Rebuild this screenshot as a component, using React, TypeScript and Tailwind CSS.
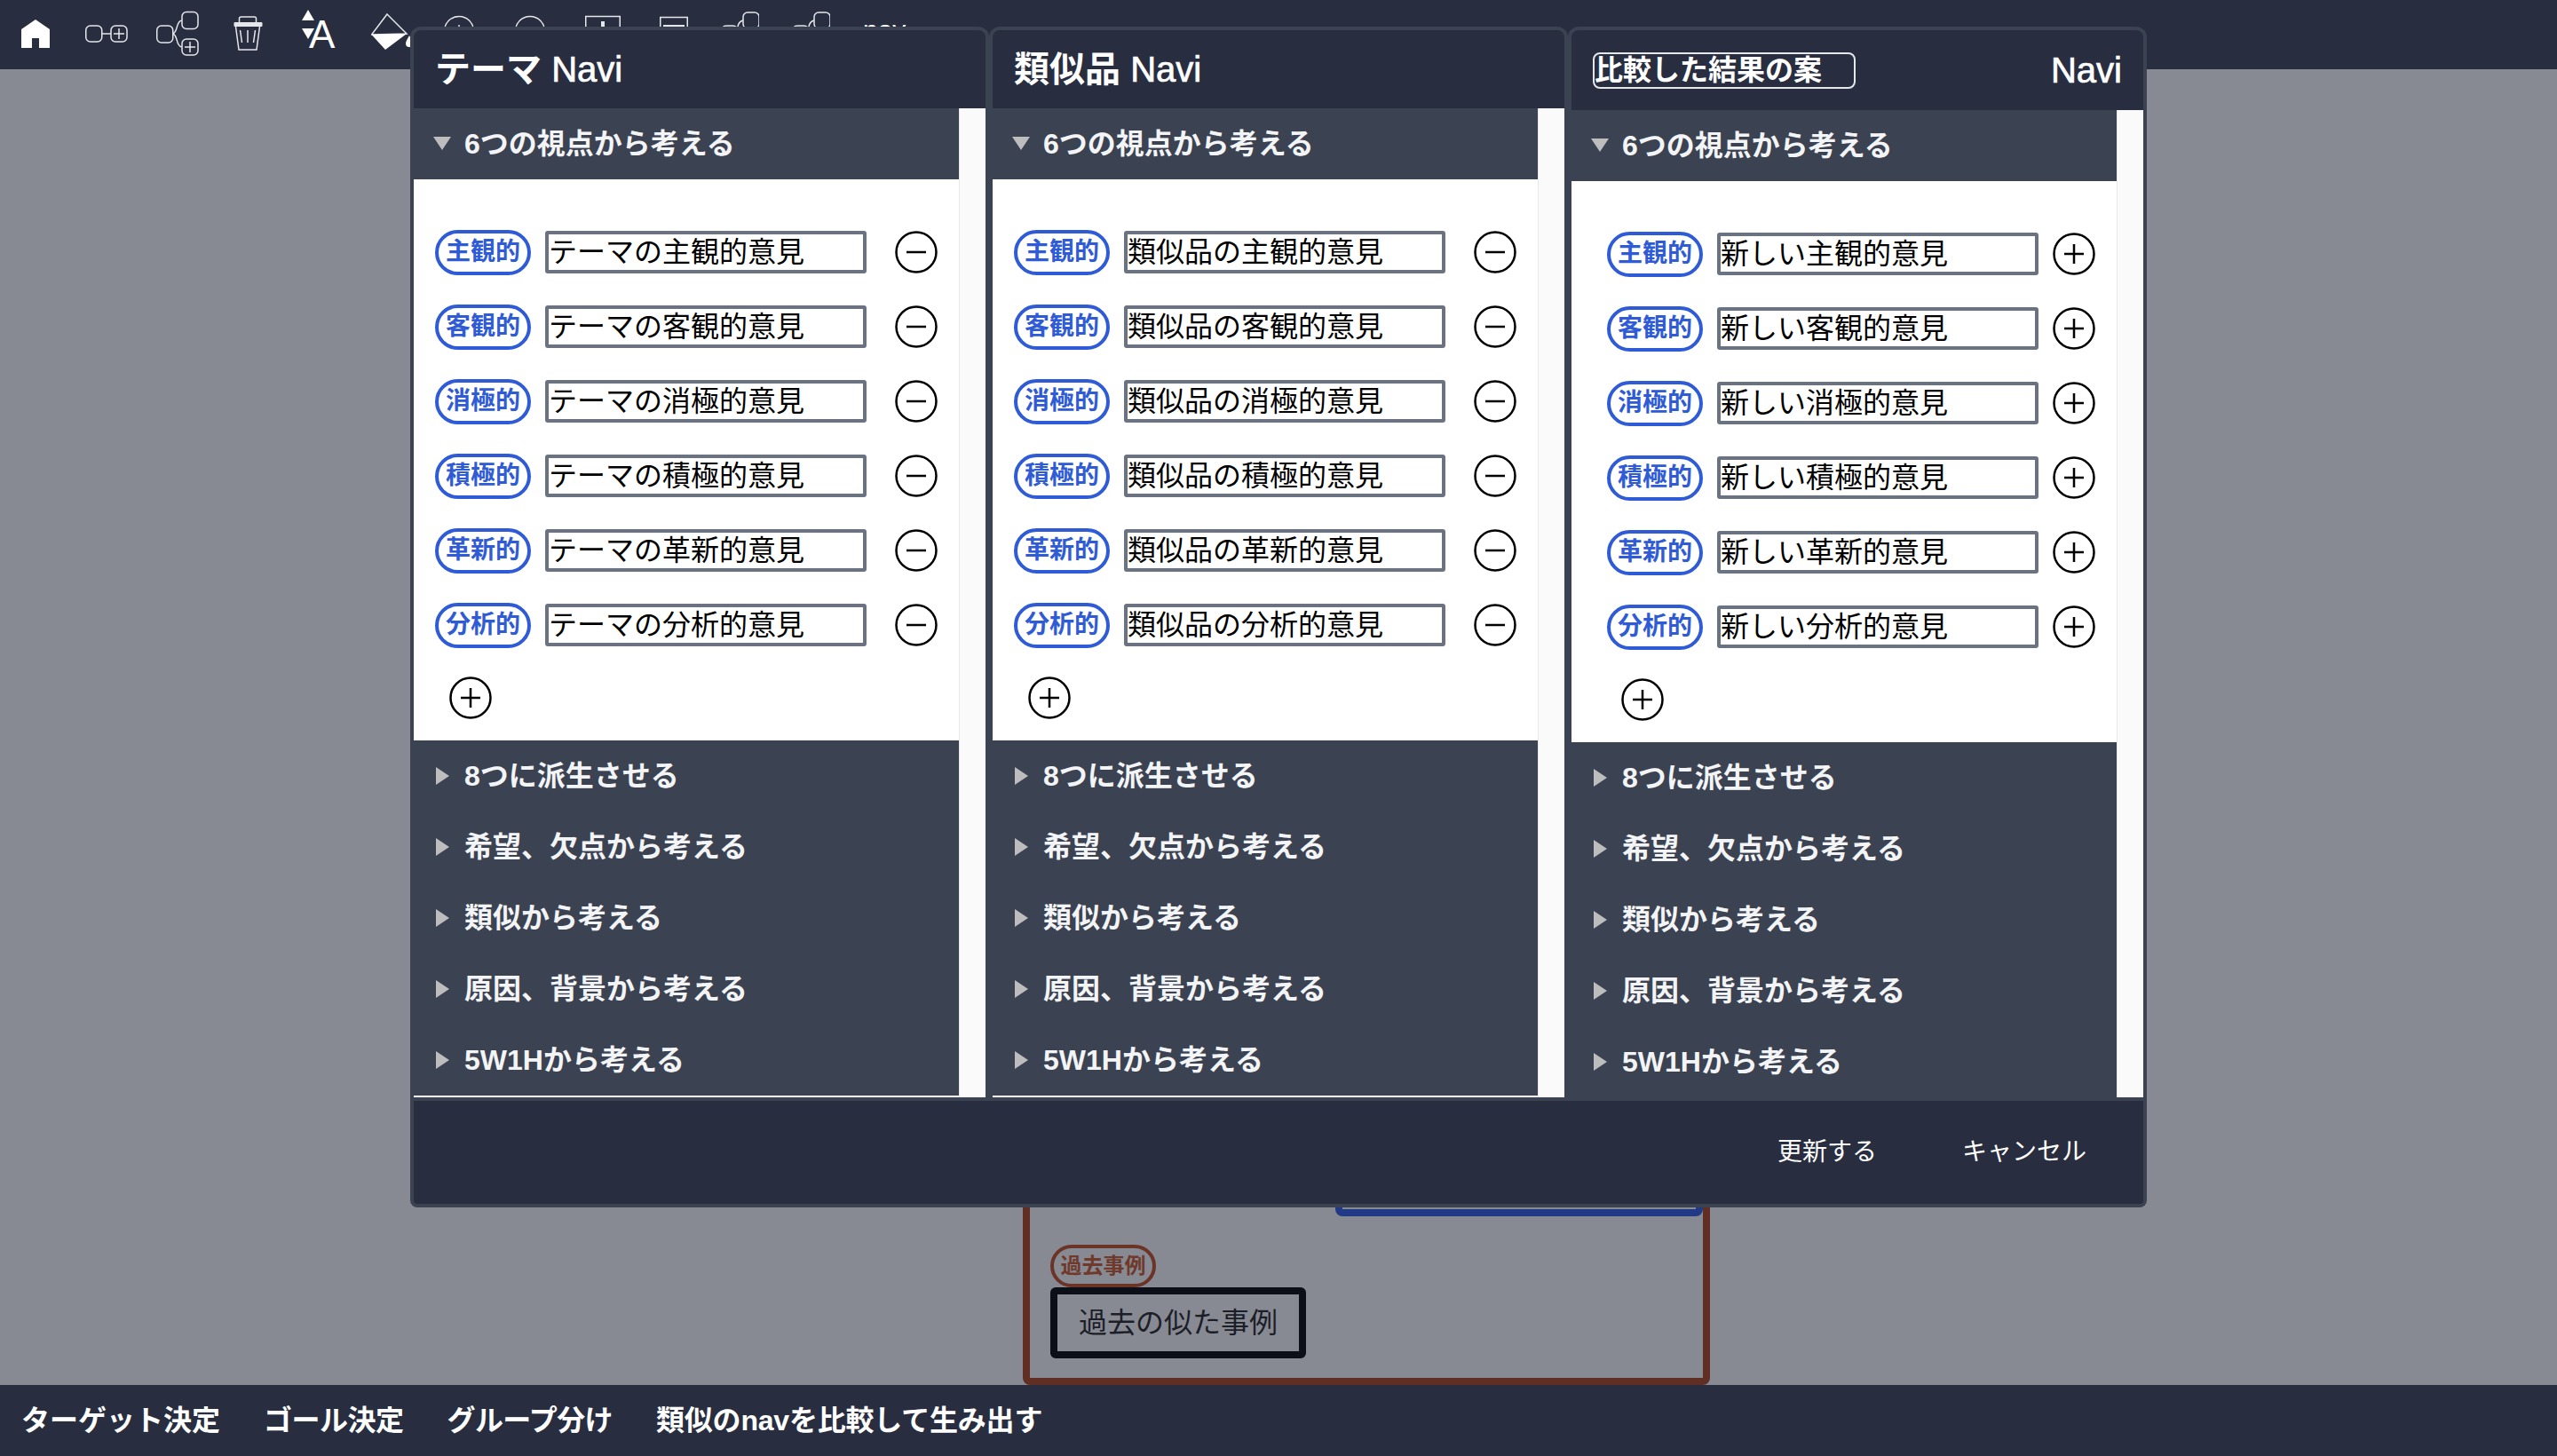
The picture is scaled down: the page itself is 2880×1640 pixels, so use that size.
import type { ReactNode } from "react";

const FONT = { fontFamily: '"Liberation Sans", "Noto Sans CJK JP", sans-serif' };
const VIEWS = ["主観的", "客観的", "消極的", "積極的", "革新的", "分析的"];
const SECTIONS = [
  "8つに派生させる",
  "希望、欠点から考える",
  "類似から考える",
  "原因、背景から考える",
  "5W1Hから考える",
];
const NAVI = "font-normal [-webkit-text-stroke:0.7px_white]";

/** y in these icons is page y: every svg is as tall as the bar. */
function BarIcon({ w, ml, children }: { w: number; ml: number; children: ReactNode }) {
  return (
    <svg width={w} height={78} viewBox={`0 0 ${w} 78`} style={{ marginLeft: ml }} className="shrink-0" fill="none" stroke="#e5e7eb" strokeWidth={1.5}>
      {children}
    </svg>
  );
}

function NodeIcons() {
  return (
    <>
      <rect x={0.75} y={29} width={18} height={18} rx={5} />
      <rect x={25} y={14} width={18} height={18} rx={5} />
      <path d="M18 36c1-8 2-12 7-13" />
    </>
  );
}

function TopBar() {
  return (
    <div className="flex h-[78px] shrink-0 bg-[#282e3f] pl-[24px]">
      <BarIcon w={32} ml={0}>
        <path d="M16 22 32 33V54H20V43H12V54H0V33Z" fill="#fff" stroke="none" />
      </BarIcon>
      <BarIcon w={48} ml={40}>
        <rect x={0.75} y={29} width={18} height={18} rx={5} />
        <path d="M18.75 38H29" />
        <rect x={29} y={29} width={18} height={18} rx={5} />
        <path d="M38 32V44M32 38H44" />
      </BarIcon>
      <BarIcon w={48} ml={32}>
        <rect x={0.75} y={29} width={18} height={19} rx={5} />
        <rect x={29} y={13.5} width={18} height={19} rx={5} />
        <rect x={29} y={44} width={18} height={18} rx={5} />
        <path d="M18.75 38c6-2 3-14 10-15M18.75 38c6 2 3 14 10 15M38 47V59M32 53H44" />
      </BarIcon>
      <BarIcon w={33} ml={39}>
        <path d="M6.5 25V21a2 2 0 0 1 2-2h15a2 2 0 0 1 2 2v4" />
        <rect x={0.5} y={25} width={32} height={5} rx={1} fill="#e5e7eb" stroke="none" />
        <path d="M2.5 30 6 56H26L29.5 30M7.5 34 9.5 48M16 34V48M24.5 34 22.5 48" />
      </BarIcon>
      <BarIcon w={40} ml={43}>
        <path d="M8 11 15 23H1ZM1 32H15L8 44Z" fill="#fff" stroke="none" />
        <text x={9} y={54} fontSize={44} fill="#fff" stroke="none" fontFamily="Liberation Sans">A</text>
      </BarIcon>
      <BarIcon w={48} ml={39}>
        <path d="M18 16 40 38 0.5 39Z" />
        <path d="M0.5 39 40 38 16 56Z" fill="#fff" stroke="none" />
        <path d="M43 40c-2 4-4 6-4 9a4 4 0 0 0 8 0c0-3-2-5-4-9Z" fill="#fff" stroke="none" />
      </BarIcon>
      <BarIcon w={34} ml={34}>
        <circle cx={17} cy={35} r={16.5} />
        <path d="M17 28V34" />
      </BarIcon>
      <BarIcon w={34} ml={46}>
        <circle cx={17} cy={35} r={16.5} />
      </BarIcon>
      <BarIcon w={40} ml={45}>
        <rect x={0.75} y={18.5} width={38.5} height={38} />
        <path d="M20 24V36" strokeWidth={4} />
      </BarIcon>
      <BarIcon w={32} ml={44}>
        <rect x={0.75} y={19.5} width={30.5} height={30} />
        <path d="M4 29H28" strokeWidth={2} />
      </BarIcon>
      <BarIcon w={43} ml={37}>
        <NodeIcons />
      </BarIcon>
      <BarIcon w={43} ml={37}>
        <NodeIcons />
      </BarIcon>
      <span className="ml-[37px] mt-[14px] text-[30px] leading-[40px] text-white">nav</span>
    </div>
  );
}

function BottomBar() {
  return (
    <div className="flex h-[80px] shrink-0 items-center gap-[49px] bg-[#282e3f] pl-[24px] text-[32px] font-semibold text-white">
      <span>ターゲット決定</span>
      <span className="tracking-[-0.5px]">ゴール決定</span>
      <span className="tracking-[-0.6px]">グループ分け</span>
      <span className="tracking-[-0.2px]">類似のnavを比較して生み出す</span>
    </div>
  );
}

function SectionHead({ label, open }: { label: string; open?: boolean }) {
  return (
    <div className="flex h-[80px] shrink-0 items-center bg-[#3b4252] pl-[22px] text-[32px] font-semibold text-[#f3f4f6]">
      <svg width={35} height={22} viewBox="0 0 35 22" className="shrink-0" fill="#bdbdbd">
        {open ? <path d="M0 3H20L10 18Z" /> : <path d="M3 1 18 11 3 21Z" />}
      </svg>
      <span>{label}</span>
    </div>
  );
}

function Row({ view, prefix, action }: { view: string; prefix: string; action: "minus" | "plus" }) {
  return (
    <div className="flex h-[52px] items-center">
      <span className="flex h-[51px] w-[108px] shrink-0 items-center justify-center rounded-full border-4 border-[#2f5cd6] text-[28px] font-semibold text-[#2f5cd6]">
        {view}
      </span>
      <input
        readOnly
        value={`${prefix}${view}意見`}
        className="ml-[16px] h-[48px] w-[362px] shrink-0 rounded-[3px] border-4 border-[#6b7280] bg-white text-[32px] text-black outline-none"
      />
      <RoundButton kind={action} className={action === "minus" ? "ml-[32px]" : "ml-[16px]"} />
    </div>
  );
}

function RoundButton({ kind, className }: { kind: "minus" | "plus"; className?: string }) {
  return (
    <svg width={48} height={48} viewBox="0 0 48 48" className={`shrink-0 ${className ?? ""}`} fill="none" stroke="#000">
      <circle cx={24} cy={24} r={22.5} strokeWidth={2.5} />
      <path d={kind === "minus" ? "M13 24H35" : "M13 24H35M24 13V35"} strokeWidth={2.5} />
    </svg>
  );
}

type PanelProps = {
  title: ReactNode;
  prefix: string;
  action: "minus" | "plus";
  inset: string;
  plusInset: string;
  headH: string;
};

function Panel({ title, prefix, action, inset, plusInset, headH }: PanelProps) {
  return (
    <section className="flex h-[1210px] w-[652px] shrink-0 flex-col rounded-t-[12px] border-4 border-[#3b4252] bg-[#282e3f]">
      <header className={`flex shrink-0 items-center justify-between rounded-t-[8px] px-[24px] text-[40px] font-semibold text-white ${headH}`}>
        {title}
      </header>
      <div className="flex min-h-0 flex-1">
        <div className="flex min-w-0 flex-1 flex-col overflow-hidden bg-white">
          <SectionHead label="6つの視点から考える" open />
          <div className={`flex h-[632px] shrink-0 flex-col gap-[32px] pt-[56px] ${inset}`}>
            {VIEWS.map((v) => (
              <Row key={v} view={v} prefix={prefix} action={action} />
            ))}
            <RoundButton kind="plus" className={plusInset} />
          </div>
          {SECTIONS.map((s) => (
            <SectionHead key={s} label={s} />
          ))}
        </div>
        <div className="w-[30px] shrink-0 border-l border-[#e8e8e8] bg-[#fafafa]" />
      </div>
    </section>
  );
}

function Modal() {
  return (
    <div className="absolute left-[462px] top-[30px] w-[1956px]">
      <div className="flex">
        <Panel
          title={
            <span>
              テーマ <span className={NAVI}>Navi</span>
            </span>
          }
          prefix="テーマの"
          action="minus"
          inset="pl-[24px]"
          plusInset="ml-[16px]"
          headH="h-[88px]"
        />
        <Panel
          title={
            <span>
              類似品 <span className={NAVI}>Navi</span>
            </span>
          }
          prefix="類似品の"
          action="minus"
          inset="pl-[24px]"
          plusInset="ml-[16px]"
          headH="h-[88px]"
        />
        <Panel
          title={
            <>
              <input
                readOnly
                value="比較した結果の案"
                className="h-[41px] w-[296px] rounded-[8px] border-2 border-[#e5e7eb] bg-transparent text-[32px] font-semibold text-white outline-none"
              />
              <span className={NAVI}>Navi</span>
            </>
          }
          prefix="新しい"
          action="plus"
          inset="pl-[40px]"
          plusInset="ml-[16px]"
          headH="h-[90px]"
        />
      </div>
      <footer className="flex h-[120px] items-center justify-end gap-[96px] rounded-b-[8px] border-4 border-t-0 border-[#3b4252] bg-[#282e3f] pr-[64px] text-[28px] text-white">
        <span>更新する</span>
        <span>キャンセル</span>
      </footer>
    </div>
  );
}

/** What is left of the canvas behind the dialog. */
function Canvas() {
  return (
    <>
      <div className="absolute left-[1152px] top-[1300px] h-[260px] w-[774px] rounded-b-[8px] border-8 border-[#602e22]" />
      <div className="absolute left-[1504px] top-[1300px] h-[70px] w-[414px] rounded-b-[8px] border-8 border-[#223a85]" />
      <span className="absolute left-[1183px] top-[1402px] flex h-[48px] w-[119px] items-center justify-center rounded-full border-4 border-[#6b3427] text-[24px] font-semibold text-[#6f3a2c]">
        過去事例
      </span>
      <div className="absolute left-[1183px] top-[1450px] flex h-[80px] w-[288px] items-center justify-center rounded-[6px] border-8 border-[#0c0f17] text-[32px] text-[#1c1f27]">
        過去の似た事例
      </div>
    </>
  );
}

export default function App() {
  return (
    <div className="relative flex h-[1640px] w-[2880px] flex-col overflow-hidden bg-[#888a93]" style={FONT}>
      <TopBar />
      <main className="flex-1" />
      <BottomBar />
      <Canvas />
      <Modal />
    </div>
  );
}
